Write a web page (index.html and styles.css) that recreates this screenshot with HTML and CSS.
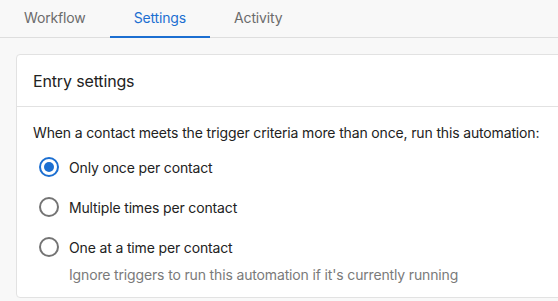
FILE: index.html
```html
<!DOCTYPE html>
<html>
<head>
<meta charset="utf-8">
<link rel="stylesheet" href="styles.css">
</head>
<body>
<nav class="tabs">
  <div class="tab">Workflow</div>
  <div class="tab active">Settings</div>
  <div class="tab">Activity</div>
</nav>
<main class="content">
  <section class="card">
    <header class="card-header">Entry settings</header>
    <div class="card-body">
      <p class="question">When a contact meets the trigger criteria more than once, run this automation:</p>
      <div class="options">
        <label class="option">
          <span class="radio checked"></span>
          <span class="label">Only once per contact</span>
        </label>
        <label class="option">
          <span class="radio"></span>
          <span class="label">Multiple times per contact</span>
        </label>
        <label class="option">
          <span class="radio"></span>
          <span class="label">One at a time per contact</span>
        </label>
        <div class="hint">Ignore triggers to run this automation if it's currently running</div>
      </div>
    </div>
  </section>
</main>
</body>
</html>
```
FILE: styles.css
```css
* { box-sizing: border-box; }
html, body { margin: 0; padding: 0; }
body {
  background: #f8f8f8;
  font-family: Inter, "Noto Sans", sans-serif;
  color: #222;
  overflow: hidden;
  width: 558px;
  height: 301px;
  letter-spacing: -0.15px;
}
.tabs {
  display: flex;
  height: 38px;
  border-bottom: 1px solid #dedede;
}
.tab {
  padding: 0 24px;
  font-size: 14px;
  line-height: 36px;
  color: #6b6b6b;
  border-bottom: 2px solid transparent;
  margin-bottom: -1px;
}
.tab.active {
  color: #1c6fd1;
  border-bottom-color: #1c6fd1;
}
.content {
  padding: 16px 0 0 16px;
}
.card {
  width: 560px;
  background: #fff;
  border: 1px solid #e2e2e2;
  border-radius: 4px;
  height: 244px;
}
.card-header {
  height: 52px;
  padding: 0 16px;
  display: flex;
  align-items: center;
  font-size: 16px;
  color: #222;
  border-bottom: 1px solid #e2e2e2;
}
.card-body {
  padding: 17px 16px 0 16px;
}
.question {
  margin: 0;
  font-size: 14px;
  line-height: 18px;
  color: #222;
}
.options {
  margin-top: 15px;
  display: flex;
  flex-direction: column;
  gap: 20px;
}
.option {
  display: flex;
  align-items: center;
  gap: 10px;
  height: 20px;
  padding-left: 6px;
}
.radio {
  width: 20px;
  height: 20px;
  border: 2px solid #747474;
  border-radius: 50%;
  flex: none;
  display: flex;
  align-items: center;
  justify-content: center;
}
.radio.checked {
  border-color: #1c6fd1;
}
.radio.checked::after {
  content: "";
  width: 10px;
  height: 10px;
  border-radius: 50%;
  background: #1c6fd1;
}
.label {
  font-size: 14px;
  color: #222;
}
.hint {
  margin-top: -11px;
  padding-left: 36px;
  font-size: 14px;
  color: #7a7a7a;
}
```
